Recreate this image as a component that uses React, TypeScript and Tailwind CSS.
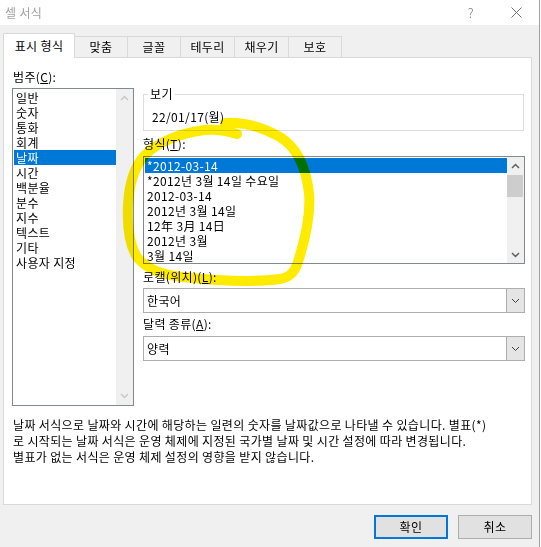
import React from "react";

const categories = ["일반", "숫자", "통화", "회계", "날짜", "시간", "백분율", "분수", "지수", "텍스트", "기타", "사용자 지정"];
const formats = ["*2012-03-14", "*2012년 3월 14일 수요일", "2012-03-14", "2012년 3월 14일", "12年 3月 14日", "2012년 3월", "3월 14일"];
const tabs = [
  { label: "맞춤", w: "w-[53px]" },
  { label: "글꼴", w: "w-[53px]" },
  { label: "테두리", w: "w-[54px]" },
  { label: "채우기", w: "w-[54px]" },
  { label: "보호", w: "w-[53px]" },
];

function Chevron({ up = false, color = "#606060", width = 1.5 }: { up?: boolean; color?: string; width?: number }) {
  return (
    <svg width="9" height="6" viewBox="0 0 9 6">
      <path d={up ? "M1 5 L4.5 1.5 L8 5" : "M1 1 L4.5 4.5 L8 1"} fill="none" stroke={color} strokeWidth={width} />
    </svg>
  );
}

function Combo({ value }: { value: string }) {
  return (
    <div className="flex h-[25px] w-[382px] border border-[#adadad] bg-white">
      <div className="flex-1 pl-[3px] leading-[23px]">{value}</div>
      <div className="flex w-[18px] items-center justify-center border-l border-[#adadad] bg-[#e5e5e5]">
        <Chevron color="#404040" width={1} />
      </div>
    </div>
  );
}

export default function App() {
  return (
    <div className="relative h-[547px] w-[541px] overflow-hidden bg-white font-['Noto_Sans_CJK_KR',sans-serif] text-[12px] tracking-[0.35px] text-black">
      <div className="h-[547px] w-[540px] border-r border-[#a0a0a0] bg-[#f0f0f0]">
        {/* title bar */}
        <div className="flex h-[25px] items-center bg-white">
          <span className="pl-[5px] text-[12px] leading-[20px] text-[#a0a0a0]">셀 서식</span>
          <span className="ml-auto mr-[37px] text-[13px] font-light leading-[20px] text-[#808080]">?</span>
          <svg width="11" height="11" viewBox="0 0 11 11" className="mr-[17px]">
            <path d="M0.5 0.5 L10.5 10.5 M10.5 0.5 L0.5 10.5" stroke="#707070" strokeWidth="1" />
          </svg>
        </div>

        {/* tabs */}
        <div className="mt-[8px] flex h-[24px] items-end pl-[3px]">
          <div className="relative z-10 -mb-px flex h-[25px] w-[72px] items-center justify-center border-x border-t border-[#d9d9d9] bg-white pb-[1px]">
            표시 형식
          </div>
          {tabs.map((t) => (
            <div key={t.label} className={`flex h-[21px] ${t.w} items-center justify-center border-r border-t border-[#d9d9d9] bg-[#f0f0f0]`}>
              {t.label}
            </div>
          ))}
        </div>

        {/* panel */}
        <div className="ml-[3px] flex h-[448px] w-[529px] flex-col border border-[#d9d9d9] bg-white pl-[8px] pt-[11px]">
          <div className="flex">
            {/* category */}
            <div className="w-[122px]">
              <div className="h-[16px] pl-[1px] leading-[16px]">
                범주(<span className="underline">C</span>):
              </div>
              <div className="mt-[3px] flex h-[318px] border border-[#828790]">
                <div className="flex-1 pl-[1px] pt-[1px]">
                  {categories.map((c) => (
                    <div
                      key={c}
                      className={`h-[15px] whitespace-nowrap pl-[2px] leading-[15px] ${c === "날짜" ? "bg-[#0078d7] text-white" : ""}`}
                    >
                      {c}
                    </div>
                  ))}
                </div>
                <div className="flex w-[17px] flex-col items-center justify-between bg-[#f0f0f0] py-[6px]">
                  <Chevron up color="#c8c8c8" />
                  <Chevron color="#c8c8c8" />
                </div>
              </div>
            </div>

            {/* right column */}
            <div className="ml-[9px] w-[382px] pt-[25px]">
              <div className="relative h-[37px] w-[381px] border border-[#dcdcdc] pl-[8px] pt-[14px] leading-[15px]">
                <span className="absolute -top-[9px] left-[4px] bg-white px-[2px] leading-[15px]">보기</span>
                22/01/17(월)
              </div>
              <div className="mt-[5px] h-[15px] leading-[15px]">
                형식(<span className="underline">T</span>):
              </div>
              <div className="mt-[5px] flex h-[108px] border border-[#828790]">
                <div className="flex-1 pl-[1px] pt-[1px]">
                  {formats.map((f, i) => (
                    <div
                      key={f}
                      className={`h-[15px] whitespace-nowrap pl-[2px] leading-[15px] ${i === 0 ? "bg-[#0078d7] text-white" : ""}`}
                    >
                      {f}
                    </div>
                  ))}
                </div>
                <div className="flex w-[17px] flex-col bg-[#f0f0f0]">
                  <div className="flex h-[17px] items-center justify-center">
                    <Chevron up />
                  </div>
                  <div className="mt-[1px] h-[22px] w-[16px] bg-[#cdcdcd]" />
                  <div className="mt-auto flex h-[17px] items-center justify-center">
                    <Chevron />
                  </div>
                </div>
              </div>
              <div className="mt-[5px] h-[15px] leading-[15px]">
                로캘(위치)(<span className="underline">L</span>):
              </div>
              <div className="mt-[4px]">
                <Combo value="한국어" />
              </div>
              <div className="mt-[3px] h-[15px] leading-[15px]">
                달력 종류(<span className="underline">A</span>):
              </div>
              <div className="mt-[5px]">
                <Combo value="양력" />
              </div>
            </div>
          </div>

          <p className="mt-[11px] pl-[1px] leading-[16px]">
            날짜 서식으로 날짜와 시간에 해당하는 일련의 숫자를 날짜값으로 나타낼 수 있습니다. 별표(*)
            <br />
            로 시작되는 날짜 서식은 운영 체제에 지정된 국가별 날짜 및 시간 설정에 따라 변경됩니다.
            <br />
            별표가 없는 서식은 운영 체제 설정의 영향을 받지 않습니다.
          </p>
        </div>

        {/* buttons */}
        <div className="mt-[10px] flex justify-end gap-[10px] pr-[7px]">
          <button className="h-[24px] w-[74px] border-2 border-[#0078d7] bg-[#e1e1e1]">확인</button>
          <button className="h-[24px] w-[74px] border border-[#adadad] bg-[#e1e1e1]">취소</button>
        </div>
      </div>

      {/* yellow highlight annotation */}
      <svg
        className="pointer-events-none absolute left-0 top-0 mix-blend-multiply"
        width="541"
        height="547"
        viewBox="0 0 541 547"
      >
        <path
          d="M225,123 C242,122 262,127 280,137 C298,148 306,168 309,193 C311,215 305,240 298,262 C295,271 291,277 280,279 C258,282 220,281 182,277 C163,275 147,270 137,257 C129,244 127,225 128,205 C129,185 133,168 145,155 C158,142 180,133 205,130 C218,129 228,131 237,134"
          fill="none"
          stroke="#ffeb00"
          strokeWidth="10"
          strokeLinecap="round"
          strokeLinejoin="round"
        />
      </svg>
    </div>
  );
}
